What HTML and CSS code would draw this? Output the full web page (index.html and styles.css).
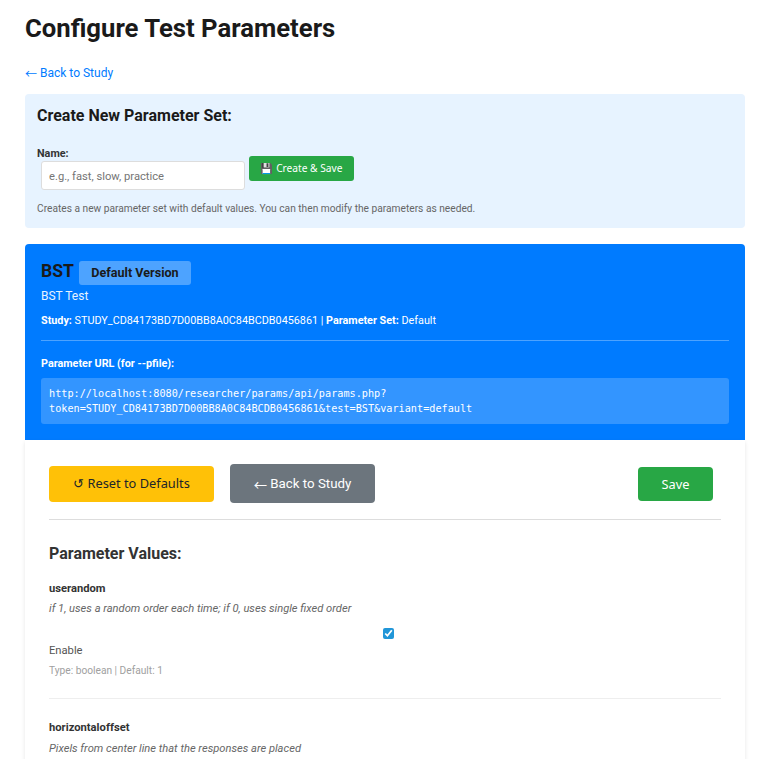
FILE: index.html
```html
<!DOCTYPE html>
<html lang="en">
<head>
  <meta charset="UTF-8">
  <meta name="viewport" content="width=device-width, initial-scale=1.0">
  <title>Configure Test Parameters</title>
  <link rel="stylesheet" href="styles.css">
</head>
<body>
  <div class="container">
    <h1>Configure Test Parameters</h1>
    <a class="back-link" href="#"><span class="arrow">←</span> Back to Study</a>

    <div class="create-box">
      <h3>Create New Parameter Set:</h3>
      <form class="create-form">
        <label class="name-label" for="setName">Name:</label>
        <input id="setName" class="name-input" type="text" placeholder="e.g., fast, slow, practice">
        <button type="button" class="btn-create">💾 Create &amp; Save</button>
      </form>
      <p class="hint">Creates a new parameter set with default values. You can then modify the parameters as needed.</p>
    </div>

    <div class="test-header">
      <div class="title-row">
        <h2>BST</h2>
        <span class="version-badge">Default Version</span>
      </div>
      <p class="test-name">BST Test</p>
      <p class="study-line"><strong>Study:</strong> STUDY_CD84173BD7D00BB8A0C84BCDB0456861 | <strong>Parameter Set:</strong> Default</p>
      <div class="url-section">
        <p class="url-label">Parameter URL (for --pfile):</p>
        <div class="url-box">http://localhost:8080/researcher/params/api/params.php?<br>token=STUDY_CD84173BD7D00BB8A0C84BCDB0456861&amp;test=BST&amp;variant=default</div>
      </div>
    </div>

    <div class="card">
      <div class="actions">
        <button type="button" class="btn-reset">↺ Reset to Defaults</button>
        <a class="btn-back" href="#"><span class="arrow">←</span> Back to Study</a>
        <button type="button" class="btn-save">Save</button>
      </div>

      <h3 class="values-title">Parameter Values:</h3>

      <div class="param">
        <div class="param-name">userandom</div>
        <div class="param-desc">if 1, uses a random order each time; if 0, uses single fixed order</div>
        <div class="check-row"><input type="checkbox" checked></div>
        <label class="check-label">Enable</label>
        <div class="param-meta">Type: boolean | Default: 1</div>
      </div>

      <div class="param">
        <div class="param-name">horizontaloffset</div>
        <div class="param-desc">Pixels from center line that the responses are placed</div>
      </div>
    </div>
  </div>
</body>
</html>
```

FILE: styles.css
```css
html, body {
  height: 100%;
  overflow: hidden;
}

body {
  margin: 0;
  font-family: Roboto, "Liberation Sans", sans-serif;
  background-color: #fff;
  color: #212529;
}

button {
  font-family: "Noto Sans", "Liberation Sans", sans-serif;
}

.arrow {
  font-family: "Noto Sans CJK SC", sans-serif;
  line-height: 0;
  vertical-align: -2px;
}

.container {
  padding: 0 27px 0 25px;
}

h1 {
  margin: 0;
  padding-top: 12px;
  font-size: 25.7px;
  line-height: 32px;
  font-weight: 700;
  color: #1a1a1a;
}

.back-link {
  display: block;
  height: 17px;
  margin-top: 21px;
  font-size: 12px;
  line-height: 17px;
  color: #007bff;
  text-decoration: none;
}

.create-box {
  margin-top: 12px;
  padding: 12px;
  height: 110px;
  background-color: #e7f3ff;
  border-radius: 4px;
}

.create-box h3 {
  margin: 0;
  font-size: 16px;
  line-height: 19px;
  font-weight: 700;
  color: #1a1a1a;
}

.create-form {
  margin-top: 22px;
}

.name-label {
  display: block;
  font-size: 10.8px;
  line-height: 14px;
  font-weight: 700;
  color: #333;
}

.name-input {
  width: 204px;
  height: 29px;
  margin-left: 4px;
  padding: 2px 7px 0;
  box-sizing: border-box;
  font-family: Roboto, sans-serif;
  font-size: 11.2px;
  background-color: #fff;
  border: 1px solid #ddd;
  border-radius: 3px;
  vertical-align: top;
}

.name-input::placeholder {
  color: #757575;
}

.btn-create {
  width: 105px;
  height: 25px;
  margin-top: -5px;
  padding: 0 0 2px;
  font-size: 10.2px;
  color: #fff;
  background-color: #28a745;
  border: none;
  border-radius: 3px;
  vertical-align: top;
}

.hint {
  margin: 12px 0 0;
  font-size: 10.2px;
  line-height: 13px;
  color: #666;
}

.test-header {
  margin-top: 16px;
  height: 196px;
  padding: 17px 16px 16px;
  box-sizing: border-box;
  background-color: #007bff;
  border-radius: 4px 4px 0 0;
  color: #fff;
}

.title-row {
  display: flex;
  align-items: flex-start;
  gap: 5px;
}

.title-row h2 {
  margin: 0;
  font-size: 17.6px;
  line-height: 21px;
  font-weight: 700;
  color: #1a1a1a;
}

.version-badge {
  width: 112px;
  font-size: 12.6px;
  line-height: 24px;
  font-weight: 700;
  text-align: center;
  color: #1a1a1a;
  background-color: rgba(255, 255, 255, 0.3);
  border-radius: 3px;
}

.test-name {
  margin: 4px 0 0;
  font-size: 12px;
  line-height: 15px;
  color: #e7f3ff;
}

.study-line {
  margin: 10px 0 0;
  font-size: 10.8px;
  line-height: 14px;
}

.url-section {
  margin-top: 12px;
  padding-top: 16px;
  border-top: 1px solid rgba(255, 255, 255, 0.3);
}

.url-label {
  margin: 0 0 7px;
  font-size: 10.8px;
  line-height: 14px;
  font-weight: 700;
}

.url-box {
  padding: 8px;
  font-family: "DejaVu Sans Mono", monospace;
  font-size: 10.2px;
  line-height: 15px;
  background-color: rgba(255, 255, 255, 0.2);
  border-radius: 3px;
}

.card {
  padding: 24px;
  height: 600px;
  background-color: #fff;
  box-shadow: 0 2px 4px rgba(0, 0, 0, 0.1);
}

.actions {
  display: flex;
  align-items: center;
  padding-bottom: 16px;
  border-bottom: 1px solid #ddd;
}

.btn-reset {
  width: 165px;
  height: 36px;
  padding: 0 0 2px;
  font-size: 12.8px;
  color: #212529;
  background-color: #ffc107;
  border: none;
  border-radius: 4px;
}

.btn-back {
  display: block;
  height: 39px;
  width: 145px;
  margin-left: 16px;
  font-size: 13.3px;
  line-height: 39px;
  text-align: center;
  text-decoration: none;
  color: #fff;
  background-color: #6c757d;
  border-radius: 4px;
}

.btn-save {
  width: 75px;
  height: 34px;
  margin-left: auto;
  margin-right: 8px;
  font-size: 12.8px;
  color: #fff;
  background-color: #28a745;
  border: none;
  border-radius: 4px;
}

.values-title {
  margin: 24px 0 0;
  font-size: 16px;
  line-height: 20px;
  font-weight: 700;
  color: #333;
}

.param {
  padding-top: 18px;
}

.param + .param {
  margin-top: 20px;
  padding-top: 22px;
  border-top: 1px solid #eee;
}

.param-name {
  font-size: 11.2px;
  line-height: 14px;
  font-weight: 700;
  color: #333;
}

.param-desc {
  margin-top: 6px;
  font-size: 11.15px;
  line-height: 14px;
  font-style: italic;
  color: #666;
}

.param + .param .param-desc {
  margin-top: 7px;
}

.check-row {
  margin-top: 12px;
  height: 12px;
  padding-left: 334px;
  line-height: 0;
}

.check-row input {
  width: 11px;
  height: 11px;
  margin: 0;
  accent-color: #2196d8;
}

.check-label {
  display: block;
  margin-top: 4px;
  font-size: 11.2px;
  line-height: 14px;
  color: #555;
}

.param-meta {
  margin-top: 6px;
  font-size: 10.2px;
  line-height: 14px;
  color: #a0a0a0;
}
```
